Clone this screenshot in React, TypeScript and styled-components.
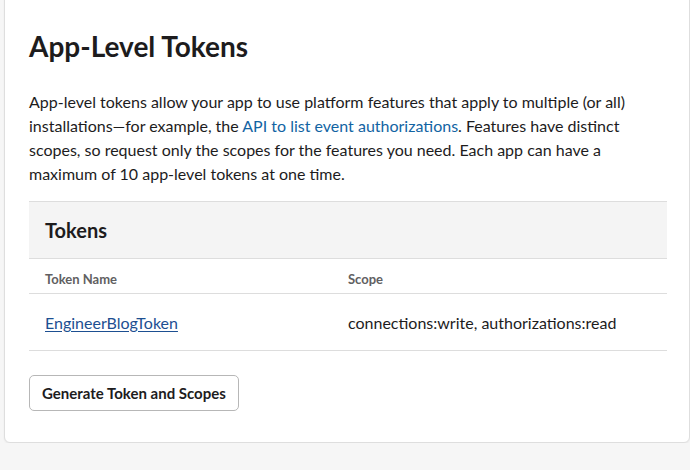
import React from 'react';
import styled, { createGlobalStyle } from 'styled-components';

const TOKENS = [
  { name: 'EngineerBlogToken', scope: 'connections:write, authorizations:read' },
];

const GlobalStyle = createGlobalStyle`
  body {
    margin: 0;
    background: #f6f6f6;
    font-family: Lato, "Noto Sans", sans-serif;
    color: #1d1c1d;
  }
`;

const App: React.FC = () => {
  return (
    <>
      <GlobalStyle />
      <Card>
        <Title>App-Level Tokens</Title>
        <Intro>
          App-level tokens allow your app to use platform features that apply to multiple (or all)
          installations—for example, the <Link href="#">API to list event authorizations</Link>. Features
          have distinct scopes, so request only the scopes for the features you need. Each app can have a
          maximum of 10 app-level tokens at one time.
        </Intro>

        <Section>
          <SectionHeader>Tokens</SectionHeader>
          <Row $head>
            <Cell $head>Token Name</Cell>
            <Cell $head>Scope</Cell>
          </Row>
          {TOKENS.map((t) => (
            <Row key={t.name}>
              <Cell>
                <TokenLink href="#">{t.name}</TokenLink>
              </Cell>
              <Cell>{t.scope}</Cell>
            </Row>
          ))}
        </Section>

        <Button type="button">Generate Token and Scopes</Button>
      </Card>
    </>
  );
};

const Card = styled.div`
  box-sizing: border-box;
  width: 686px;
  margin: -8px 0 0 4px;
  padding: 36px 22px 31px 24px;
  background: #fff;
  border: 1px solid #dedede;
  border-radius: 6px;
  box-shadow: 0 1px 2px rgba(0, 0, 0, 0.06);
`;

const Title = styled.h1`
  margin: 0 0 27px;
  font-size: 28px;
  line-height: 34px;
  font-weight: 700;
  color: #1d1c1d;
`;

const Intro = styled.p`
  margin: 0 0 15px;
  font-size: 16px;
  line-height: 24px;
`;

const Link = styled.a`
  color: #1264a3;
  text-decoration: none;
`;

const Section = styled.div`
  border-top: 1px solid #dddddd;
`;

const SectionHeader = styled.h2`
  margin: 0;
  padding: 0 16px;
  height: 56px;
  display: flex;
  align-items: center;
  background: #f4f4f4;
  font-size: 20px;
  font-weight: 700;
  border-bottom: 1px solid #dddddd;
`;

const Row = styled.div<{ $head?: boolean }>`
  display: grid;
  grid-template-columns: 303px 1fr;
  align-items: center;
  height: ${(p) => (p.$head ? '34px' : '56px')};
  border-bottom: 1px solid #dddddd;
`;

const Cell = styled.div<{ $head?: boolean }>`
  padding: ${(p) => (p.$head ? '6px 16px 0' : '0 16px')};
  font-size: ${(p) => (p.$head ? '13px' : '16px')};
  font-weight: ${(p) => (p.$head ? 700 : 400)};
  color: ${(p) => (p.$head ? '#616061' : '#1d1c1d')};
`;

const TokenLink = styled.a`
  color: #1d4f91;
  text-decoration: underline;
  text-underline-offset: 2px;
`;

const Button = styled.button`
  margin-top: 24px;
  height: 36px;
  padding: 0 12px;
  background: #fff;
  border: 1px solid #b7b7b7;
  border-radius: 5px;
  font-family: Lato, "Noto Sans", sans-serif;
  font-size: 15px;
  font-weight: 700;
  color: #1d1c1d;
  cursor: pointer;
`;

export default App;
